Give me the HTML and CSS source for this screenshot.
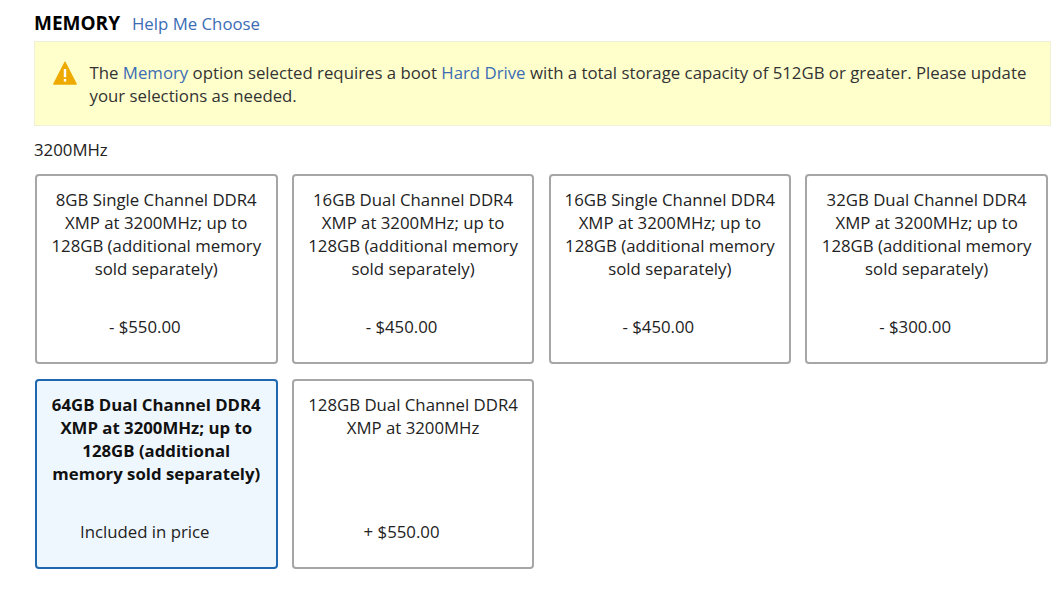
FILE: index.html
```html
<!DOCTYPE html>
<html lang="en">
<head>
<meta charset="utf-8">
<title>Memory</title>
<link rel="stylesheet" href="styles.css">
</head>
<body>
<main class="section">
  <header class="heading">
    <h2 class="title">MEMORY</h2>
    <a class="link" href="#">Help Me Choose</a>
  </header>
  <div class="alert">
    <svg class="alert-icon" width="24" height="24" viewBox="0 0 24 24" aria-hidden="true">
      <path d="M12 1.2 L23.2 23 H0.8 Z" fill="#eeaa00" stroke="#eeaa00" stroke-width="1.4" stroke-linejoin="round"/>
      <rect x="10.8" y="8" width="2.4" height="8.2" fill="#fff"/>
      <rect x="10.8" y="18" width="2.4" height="2.6" fill="#fff"/>
    </svg>
    <p class="alert-text">The <a class="link" href="#">Memory</a> option selected requires a boot <a class="link" href="#">Hard Drive</a> with a total storage capacity of 512GB or greater. Please update your selections as needed.</p>
  </div>
  <div class="speed">3200MHz</div>
  <div class="grid">
    <div class="card">
      <div class="name">8GB Single Channel DDR4 XMP at 3200MHz; up to 128GB (additional memory sold separately)</div>
      <div class="price">- $550.00</div>
    </div>
    <div class="card">
      <div class="name">16GB Dual Channel DDR4 XMP at 3200MHz; up to 128GB (additional memory sold separately)</div>
      <div class="price">- $450.00</div>
    </div>
    <div class="card">
      <div class="name">16GB Single Channel DDR4 XMP at 3200MHz; up to 128GB (additional memory sold separately)</div>
      <div class="price">- $450.00</div>
    </div>
    <div class="card">
      <div class="name">32GB Dual Channel DDR4 XMP at 3200MHz; up to 128GB (additional memory sold separately)</div>
      <div class="price">- $300.00</div>
    </div>
    <div class="card selected">
      <div class="name">64GB Dual Channel DDR4 XMP at 3200MHz; up to 128GB (additional memory sold separately)</div>
      <div class="price">Included in price</div>
    </div>
    <div class="card">
      <div class="name">128GB Dual Channel DDR4 XMP at 3200MHz</div>
      <div class="price">+ $550.00</div>
    </div>
  </div>
</main>
</body>
</html>
```
FILE: styles.css
```css
html, body {
  margin: 0;
  padding: 0;
  background: #fff;
}
body {
  font-family: "Open Sans", "Liberation Sans", sans-serif;
  font-size: 16.8px;
  line-height: 23px;
  color: #222;
}
.section {
  width: 1017px;
  margin-left: 34px;
  padding-top: 12px;
}
.heading {
  display: flex;
  align-items: baseline;
  gap: 12px;
  height: 29px;
}
.title {
  margin: 0;
  font-size: 19px;
  line-height: 23px;
  font-weight: 700;
  color: #000;
}
.link {
  color: #3b6cb4;
  text-decoration: none;
}
.alert {
  display: flex;
  align-items: flex-start;
  gap: 12.5px;
  box-sizing: border-box;
  height: 85px;
  padding: 19px 20px 0 18px;
  background: #ffffcc;
  border: 1px solid #f0f0d8;
}
.alert-icon {
  flex: none;
}
.alert-text {
  margin: 0;
  color: #333;
}
.speed {
  margin-top: 12px;
  height: 36px;
}
.grid {
  display: grid;
  grid-template-columns: repeat(4, 242.5px);
  column-gap: 14.3px;
  row-gap: 15px;
  margin-left: 1px;
}
.card {
  box-sizing: border-box;
  height: 190px;
  padding: 12px 12px 0;
  border: 2px solid #a6a6a6;
  border-radius: 4px;
  text-align: center;
  display: flex;
  flex-direction: column;
}
.name {
  height: 92px;
}
.price {
  margin-top: 35px;
  padding-right: 23px;
}
.selected {
  border-color: #1f67ae;
  background: #eff7fe;
}
.selected .name {
  font-weight: 700;
  color: #111;
}
```
